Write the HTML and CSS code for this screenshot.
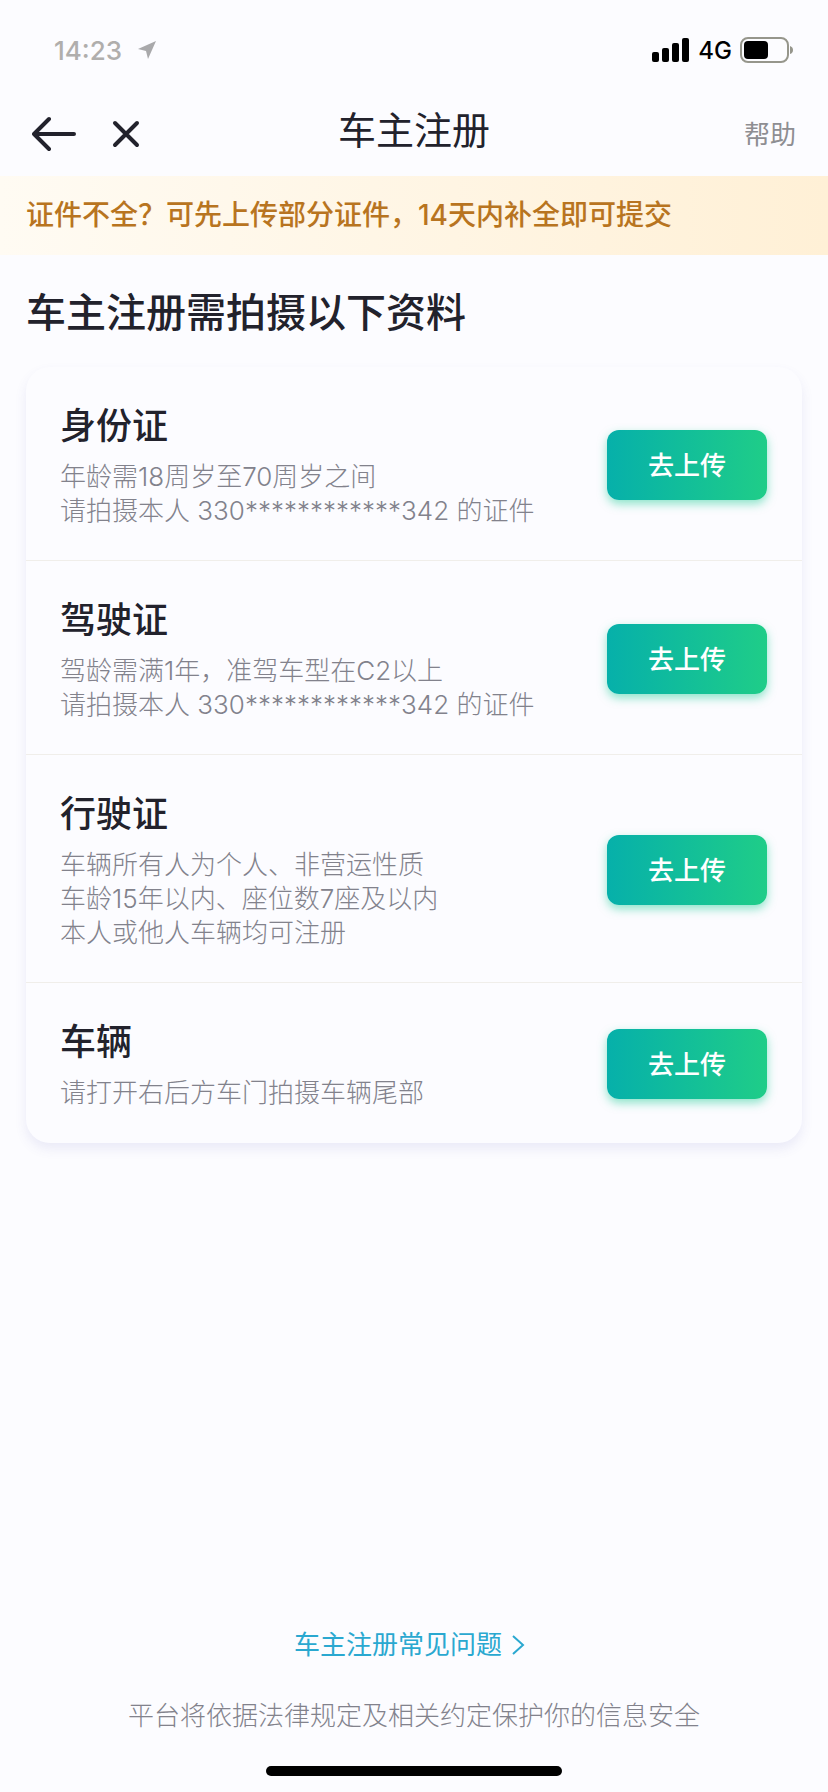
FILE: index.html
```html
<!DOCTYPE html>
<html lang="zh-CN">
<head>
  <meta charset="UTF-8">
  <meta name="viewport" content="width=device-width, initial-scale=1">
  <title>车主注册</title>
  <link rel="stylesheet" href="styles.css">
</head>
<body>

<div class="status-bar">
  <div class="status-left">
    <span>14:23</span>
    <svg class="location" width="18" height="18" viewBox="0 0 18 18"><path d="M18 0 L0 8 L8 10 L10 18 Z"/></svg>
  </div>
  <div class="status-right">
    <svg width="38" height="24" viewBox="0 0 38 24">
      <rect x="0" y="14" width="7" height="10" rx="2"/>
      <rect x="10" y="10" width="7" height="14" rx="2"/>
      <rect x="20" y="5" width="7" height="19" rx="2"/>
      <rect x="30" y="0" width="7" height="24" rx="2"/>
    </svg>
    <span>4G</span>
    <svg width="54" height="26" viewBox="0 0 54 26">
      <rect class="battery-case" x="1" y="1" width="47" height="24" rx="7"/>
      <rect x="4" y="4" width="24" height="18" rx="4"/>
      <path class="battery-cap" d="M50 9 Q53 10 53 13 Q53 16 50 17 Z"/>
    </svg>
  </div>
</div>

<header class="nav">
  <div class="nav-left">
    <button class="icon-btn" type="button" aria-label="返回">
      <svg width="46" height="36" viewBox="0 0 46 36"><path d="M17 3 L2 18 L17 33 M2 18 H42"/></svg>
    </button>
    <button class="icon-btn" type="button" aria-label="关闭">
      <svg width="28" height="28" viewBox="0 0 28 28"><path d="M3 3 L25 25 M25 3 L3 25"/></svg>
    </button>
  </div>
  <h1>车主注册</h1>
  <a class="help" href="#">帮助</a>
</header>

<p class="notice">证件不全？可先上传部分证件，14天内补全即可提交</p>

<main>
  <h2>车主注册需拍摄以下资料</h2>

  <ul class="card">
    <li class="item">
      <div class="info">
        <h3>身份证</h3>
        <p>年龄需18周岁至70周岁之间</p>
        <p>请拍摄本人 330************342 的证件</p>
      </div>
      <button class="upload" type="button">去上传</button>
    </li>
    <li class="item">
      <div class="info">
        <h3>驾驶证</h3>
        <p>驾龄需满1年，准驾车型在C2以上</p>
        <p>请拍摄本人 330************342 的证件</p>
      </div>
      <button class="upload" type="button">去上传</button>
    </li>
    <li class="item">
      <div class="info">
        <h3>行驶证</h3>
        <p>车辆所有人为个人、非营运性质</p>
        <p>车龄15年以内、座位数7座及以内</p>
        <p>本人或他人车辆均可注册</p>
      </div>
      <button class="upload" type="button">去上传</button>
    </li>
    <li class="item">
      <div class="info">
        <h3>车辆</h3>
        <p>请打开右后方车门拍摄车辆尾部</p>
      </div>
      <button class="upload" type="button">去上传</button>
    </li>
  </ul>
</main>

<footer>
  <a class="faq" href="#">车主注册常见问题
    <svg width="14" height="22" viewBox="0 0 14 22"><path d="M1 2 L11 11 L1 20"/></svg>
  </a>
  <p>平台将依据法律规定及相关约定保护你的信息安全</p>
  <div class="home-bar"></div>
</footer>

</body>
</html>
```

FILE: styles.css
```css
* {
  box-sizing: border-box;
  margin: 0;
  padding: 0;
}
body {
  display: flex;
  flex-direction: column;
  min-height: 100vh;
  font-family: Inter, "Noto Sans CJK SC", sans-serif;
  font-size: 26px;
  color: #22222c;
  background-color: #fcfcff;
}
a {
  text-decoration: none;
}
button {
  border: none;
  font-family: inherit;
  cursor: pointer;
}

/* status bar */
.status-bar {
  display: flex;
  justify-content: space-between;
  align-items: center;
  height: 100px;
  padding: 0 34px 0 54px;
  font-size: 24px;
  font-weight: 500;
  color: #000;
}
.status-left,
.status-right {
  display: flex;
  align-items: center;
}
.status-left {
  gap: 16px;
  font-size: 26px;
  color: #b0aeac;
}
.status-right {
  gap: 8px;
}
.location {
  fill: #a9a9ab;
}
.battery-case {
  fill: none;
  stroke: #96968c;
  stroke-width: 2;
}
.battery-cap {
  fill: #96968c;
}

/* nav */
.nav {
  display: grid;
  grid-template-columns: 1fr auto 1fr;
  align-items: center;
  height: 76px;
  padding: 0 32px 8px;
}
.nav-left {
  display: flex;
  align-items: center;
  gap: 34px;
}
.icon-btn {
  display: flex;
  background: none;
}
.icon-btn path {
  fill: none;
  stroke: #22222c;
  stroke-width: 4;
  stroke-linecap: round;
  stroke-linejoin: round;
}
.nav h1 {
  padding-bottom: 8px;
  font-size: 38px;
  line-height: 48px;
  font-weight: 400;
}
.help {
  justify-self: end;
  padding-bottom: 4px;
  font-weight: 400;
  color: #8e8e92;
}

.notice {
  padding: 18px 26px;
  font-size: 28px;
  line-height: 43px;
  font-weight: 500;
  color: #b87420;
  background: linear-gradient(90deg, #fffbf3, #fff0d6);
}

/* document list */
main {
  padding: 0 26px;
}
main h2 {
  padding: 30px 0 26px;
  font-size: 40px;
  line-height: 56px;
  font-weight: 500;
}
.card {
  list-style: none;
  border-radius: 24px;
  box-shadow: 0 6px 12px rgba(80, 80, 180, 0.1);
}
.item {
  display: flex;
  justify-content: space-between;
  align-items: center;
  padding: 35px 35px 32px 34px;
  border-bottom: 1px solid #f0eeea;
}
.item:last-child {
  border-bottom-color: transparent;
}
.item h3 {
  margin-bottom: 10px;
  font-size: 36px;
  line-height: 48px;
  font-weight: 500;
}
.item p {
  line-height: 34px;
  font-weight: 300;
  color: #82828c;
}
.upload {
  width: 160px;
  height: 70px;
  padding-bottom: 4px;
  flex-shrink: 0;
  border-radius: 12px;
  font-size: 26px;
  font-weight: 500;
  color: #fff;
  background: linear-gradient(90deg, #06b0aa, #1fcd88);
  box-shadow: 0 4px 10px rgba(30, 205, 150, 0.5);
}

footer {
  display: flex;
  flex-direction: column;
  align-items: center;
  margin-top: auto;
  padding-bottom: 16px;
}
.faq {
  display: flex;
  align-items: center;
  gap: 10px;
  padding-right: 8px;
  line-height: 36px;
  color: #2aa8d0;
}
.faq path {
  fill: none;
  stroke: #2aa8d0;
  stroke-width: 2;
}
footer p {
  margin: 35px 0 32px;
  line-height: 36px;
  font-weight: 300;
  color: #82828c;
}
.home-bar {
  width: 296px;
  height: 10px;
  border-radius: 5px;
  background-color: #000;
}
```
